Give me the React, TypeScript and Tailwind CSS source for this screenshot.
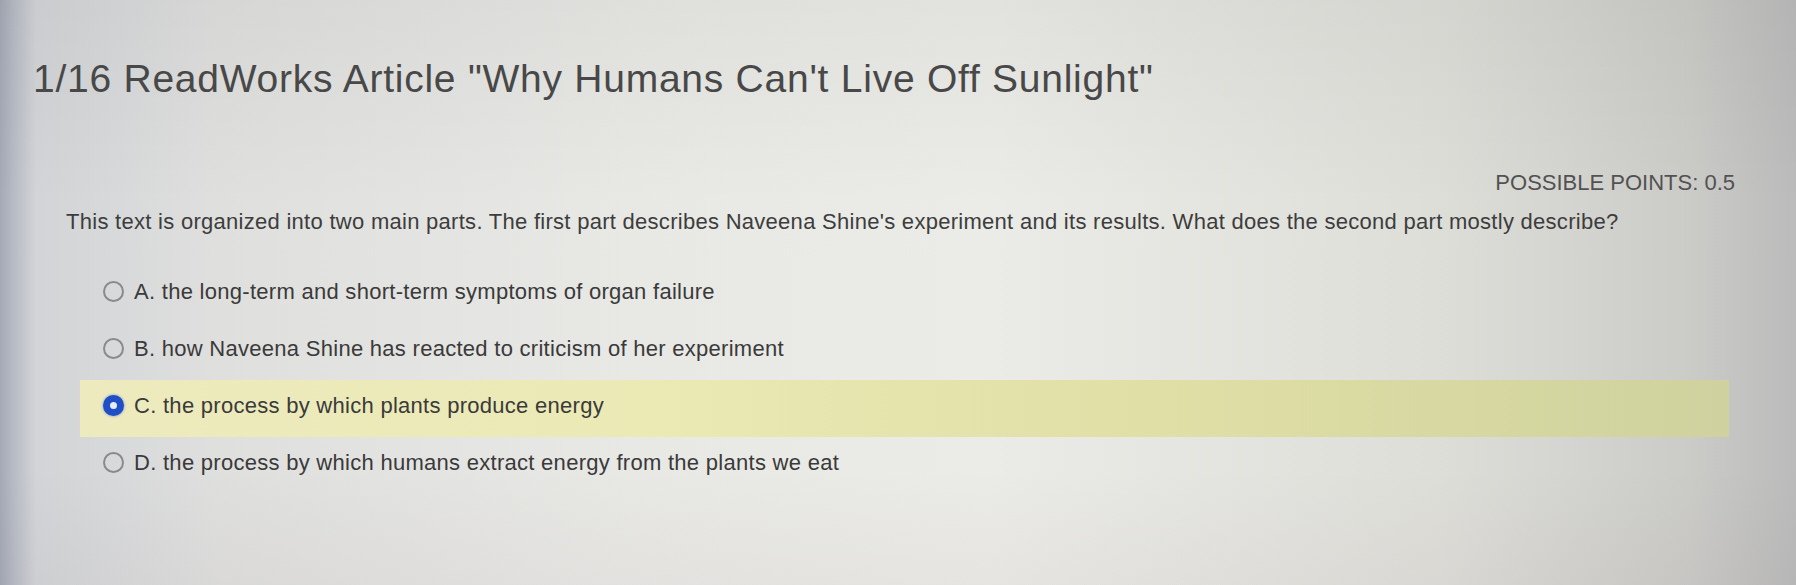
const options = [
  { id: "A", text: "the long-term and short-term symptoms of organ failure" },
  { id: "B", text: "how Naveena Shine has reacted to criticism of her experiment" },
  { id: "C", text: "the process by which plants produce energy" },
  { id: "D", text: "the process by which humans extract energy from the plants we eat" },
];

const selected = "C";

function Radio({ checked }: { checked: boolean }) {
  if (checked) {
    return (
      <span className="flex h-[21px] w-[21px] shrink-0 items-center justify-center rounded-full bg-[#1f4fc6] shadow-[0_0_3px_rgba(40,80,220,0.6)]">
        <span className="h-[7px] w-[7px] rounded-full bg-[#e8ecf8]" />
      </span>
    );
  }
  return <span className="h-[21px] w-[21px] shrink-0 rounded-full border-2 border-[#8a8a8a]" />;
}

export default function App() {
  return (
    <div className="h-[585px] w-full overflow-hidden bg-[linear-gradient(180deg,rgba(0,0,0,0.04),rgba(0,0,0,0)_35%,rgba(0,0,0,0)_80%,rgba(60,30,40,0.03)),linear-gradient(90deg,#a4a9b6_0%,#b8bcc5_0.8%,#d2d4d7_2%,#dfdfde_12%,#e8e8e5_35%,#ebebe7_55%,#dedeD9_80%,#cbcbc8_94%,#bbbbbb_100%)] font-['Liberation_Sans',Arial,sans-serif]">
      {/* Title */}
      <h1 className="pl-[33px] pt-[59px] text-[39px] leading-none tracking-[0.75px] text-[#484848]">
        1/16 ReadWorks Article "Why Humans Can't Live Off Sunlight"
      </h1>

      {/* Points */}
      <div className="mt-[74px] flex justify-end pr-[61px]">
        <span className="text-[22px] leading-none text-[#525252]">POSSIBLE POINTS: 0.5</span>
      </div>

      {/* Question */}
      <p className="mt-[17px] pl-[66px] text-[22px] leading-none tracking-[0.28px] text-[#3d3d3d]">
        This text is organized into two main parts. The first part describes Naveena Shine's experiment and its
        results. What does the second part mostly describe?
      </p>

      {/* Choices */}
      <div className="ml-[80px] mr-[67px] mt-[33px] flex flex-col">
        {options.map((o) => {
          const checked = o.id === selected;
          return (
            <div
              key={o.id}
              className={
                checked
                  ? "flex h-[57px] items-center gap-[10px] bg-[linear-gradient(90deg,#edebbe,#ebe9b4_35%,#e0dfa6_65%,#cfd29e)] pb-[6px] pl-[23px]"
                  : "flex h-[57px] items-center gap-[10px] pb-[6px] pl-[23px]"
              }
            >
              <Radio checked={checked} />
              <span className="text-[22px] leading-none tracking-[0.28px] text-[#3a3a3a]">
                {o.id}. {o.text}
              </span>
            </div>
          );
        })}
      </div>
    </div>
  );
}
